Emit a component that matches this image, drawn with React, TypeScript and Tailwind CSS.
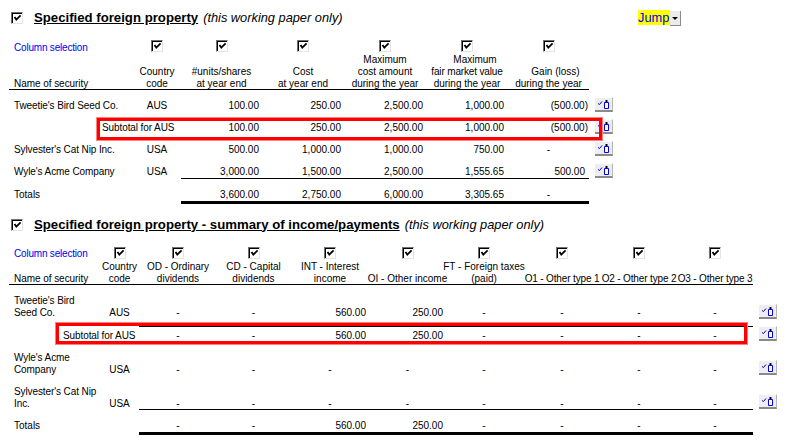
import type { ReactNode } from 'react'

const grid1 = 'grid grid-cols-[124px_48px_81px_82px_82px_82px_81px_24px]'
const grid2 = 'grid grid-cols-[91px_39px_78px_73px_80px_75px_78px_78px_76px_76px_24px]'

function Check() {
  return (
    <span className="inline-block w-[12px] h-[12px] shrink-0 bg-white border border-t-[#707070] border-l-[#707070] border-r-[#e4e4e4] border-b-[#e4e4e4]">
      <svg width="10" height="10" viewBox="0 0 10 10" className="block">
        <path d="M0 0.5H10M0.5 0V10" stroke="#000" strokeWidth="1" fill="none" />
        <path d="M2.5 4L4.3 6.6L8.6 2.4" stroke="#000" strokeWidth="1.8" fill="none" />
      </svg>
    </span>
  )
}

function RowButton() {
  return (
    <button className="block ml-[6px] w-[18px] h-[15px] bg-[#ededf2] border-b-2 border-b-[#8a8a8a] border-r border-r-[#b5b5b5] border-t border-t-white">
      <svg width="17" height="12" viewBox="0 0 17 12" className="block">
        <path d="M3 5.5L4.5 6.5L7 3.5" stroke="#0000ee" strokeWidth="1" fill="none" />
        <path d="M9.5 4.5H13.5V10.5H9.5Z" stroke="#0000ee" strokeWidth="1" fill="#fff" />
        <path d="M10.5 2H12.5V4H10.5Z" fill="#000" />
      </svg>
    </button>
  )
}

function Title({ children }: { children: ReactNode }) {
  return (
    <div className="flex items-center h-[16px] pl-[2px]">
      <Check />
      <span className="ml-[11px] leading-[16px] whitespace-nowrap">{children}</span>
    </div>
  )
}

function HeadCell({ labels, height }: { labels: ReactNode; height: string }) {
  return (
    <div className={`flex flex-col items-center ${height} justify-between text-center whitespace-nowrap`}>
      <Check />
      <div className="-mb-[1px]">{labels}</div>
    </div>
  )
}

const Num = ({ v, pr, cls = '' }: { v: string; pr: string; cls?: string }) => (
  <div className={`text-right ${pr} ${cls}`}>{v}</div>
)

const rows1 = [
  { name: "Tweetie's Bird Seed Co.", code: 'AUS', v: ['100.00', '250.00', '2,500.00', '1,000.00', '(500.00)'] },
  { name: 'Subtotal for AUS', code: '', v: ['100.00', '250.00', '2,500.00', '1,000.00', '(500.00)'] },
  { name: "Sylvester's Cat Nip Inc.", code: 'USA', v: ['500.00', '1,000.00', '1,000.00', '750.00', '-'] },
  { name: "Wyle's Acme Company", code: 'USA', v: ['3,000.00', '1,500.00', '2,500.00', '1,555.65', '500.00'] },
]

function gainCell(v: string, cls: string) {
  if (v === '-') return <div className={`text-center ${cls}`}>-</div>
  return <Num v={v} pr={v.startsWith('(') ? 'pr-[1px]' : 'pr-[4px]'} cls={cls} />
}

function PropertySection() {
  return (
    <section className="relative pl-[9px]">
      <div className="relative">
        <Title>
          <span className="text-[13.2px] font-bold underline">Specified foreign property</span>
          <span className="ml-[5px] text-[12.8px] italic">(this working paper only)</span>
        </Title>
        <div className="absolute left-[629px] top-0 flex items-start">
          <span className="bg-[#ffff00] text-[#0000ee] text-[12.8px] leading-[15px] h-[15px] w-[32px]">Jump</span>
          <span className="mt-[1px] w-[11px] h-[15px] flex items-center justify-center bg-[#ececec] border-b border-r border-b-[#8a8a8a] border-r-[#8a8a8a]">
            <span className="w-0 h-0 border-l-[3px] border-r-[3px] border-t-[3px] border-l-transparent border-r-transparent border-t-black" />
          </span>
        </div>
      </div>

      <div className={`${grid1} w-[604px] mt-[14px]`}>
        <div className="flex flex-col justify-between h-[49px] pl-[5px]">
          <span className="text-[#0000ee] mt-[2px] tracking-[-0.2px]">Column selection</span>
          <span className="-mb-[1px] tracking-[-0.05px]">Name of security</span>
        </div>
        <HeadCell height="h-[49px]" labels={<><div>Country</div><div>code</div></>} />
        <HeadCell height="h-[49px]" labels={<><div>#units/shares</div><div>at year end</div></>} />
        <HeadCell height="h-[49px]" labels={<><div>Cost</div><div>at year end</div></>} />
        <HeadCell height="h-[49px]" labels={<><div>Maximum</div><div>cost amount</div><div>during the year</div></>} />
        <HeadCell height="h-[49px]" labels={<><div className="pl-[16px]">Maximum</div><div className="tracking-[-0.15px]">fair market value</div><div>during the year</div></>} />
        <HeadCell height="h-[49px]" labels={<><div className="pl-[14px]">Gain (loss)</div><div>during the year</div></>} />
      </div>
      <div className="w-[580px] h-px bg-black" />

      <div className="mt-[6px]">
        {rows1.map((r, i) => {
          const last = i === 3
          const cls = last ? 'h-[17px] pt-[4px] border-b border-black' : 'pt-[4px]'
          return (
            <div key={r.name} className={`${grid1} w-[604px] ${last ? 'h-[17px]' : 'h-[22px]'}`}>
              {r.code ? (
                <>
                  <div className="pt-[4px] pl-[5px] whitespace-nowrap tracking-[-0.1px]">{r.name}</div>
                  <div className="pt-[4px] text-center">{r.code}</div>
                </>
              ) : (
                <div className="col-span-2 pt-[4px] pl-[93px] whitespace-nowrap tracking-[-0.1px]">{r.name}</div>
              )}
              <Num v={r.v[0]} pr="pr-[3px]" cls={cls} />
              <Num v={r.v[1]} pr="pr-[3px]" cls={cls} />
              <Num v={r.v[2]} pr="pr-[3px]" cls={cls} />
              <Num v={r.v[3]} pr="pr-[4px]" cls={cls} />
              {gainCell(r.v[4], cls)}
              <div className="pt-[1px]"><RowButton /></div>
            </div>
          )
        })}
        <div className={`${grid1} w-[604px]`}>
          <div className="col-span-2 pt-[10px] pl-[5px]">Totals</div>
          {['3,600.00', '2,750.00', '6,000.00'].map((v) => (
            <Num key={v} v={v} pr="pr-[3px]" cls="pt-[10px] border-b-[3px] border-black" />
          ))}
          <Num v="3,305.65" pr="pr-[4px]" cls="pt-[10px] border-b-[3px] border-black" />
          <div className="pt-[10px] border-b-[3px] border-black text-center">-</div>
        </div>
      </div>

      {/* red highlight sits over the subtotal row */}
      <div className="absolute left-[97px] top-[108px] w-[505px] h-[22px] border-[3px] border-[#ff0000] outline outline-1 outline-[#ff8080]" />
    </section>
  )
}

const rows2 = [
  { name: ["Tweetie's Bird", 'Seed Co.'], code: 'AUS', int: '560.00', oi: '250.00', h: 'h-[34px]', btn: 'pt-[10px]' },
  { name: ['Subtotal for AUS'], code: '', int: '560.00', oi: '250.00', h: 'h-[23px]', btn: '-mt-[2px]' },
  { name: ["Wyle's Acme", 'Company'], code: 'USA', int: '-', oi: '-', h: 'h-[34px]', btn: 'pt-[9px]' },
  { name: ["Sylvester's Cat Nip", 'Inc.'], code: 'USA', int: '-', oi: '-', h: 'h-[25px]', btn: 'pt-[9px]' },
]

function IncomeRow({ r, i }: { r: (typeof rows2)[number]; i: number }) {
  const sub = i === 1
  const cls =
    i === 0
      ? 'h-[33px] pt-[13px] border-b border-black'
      : sub
        ? 'pt-[2px]'
        : i === 3
          ? 'h-[25px] pt-[13px] border-b border-black'
          : 'pt-[13px]'
  return (
    <div className={`${grid2} w-[768px] ${r.h}`}>
      {sub ? (
        <div className="col-span-2 pt-[2px] pl-[54px] whitespace-nowrap tracking-[-0.1px]">{r.name[0]}</div>
      ) : (
        <>
          <div className="whitespace-nowrap pl-[5px] pt-[1px] tracking-[-0.1px]">
            {r.name.map((n) => <div key={n}>{n}</div>)}
          </div>
          <div className="pt-[13px] text-center">{r.code}</div>
        </>
      )}
      <div className={`text-center ${cls}`}>-</div>
      <div className={`text-center ${cls}`}>-</div>
      {r.int === '-' ? <div className={`text-center ${cls}`}>-</div> : <Num v={r.int} pr="pr-[4px]" cls={cls} />}
      {r.oi === '-' ? <div className={`text-center ${cls}`}>-</div> : <Num v={r.oi} pr="pr-[2px]" cls={cls} />}
      <div className={`text-center ${cls}`}>-</div>
      <div className={`text-center ${cls}`}>-</div>
      <div className={`text-center ${cls}`}>-</div>
      <div className={`text-center ${cls}`}>-</div>
      <div className={r.btn}><RowButton /></div>
    </div>
  )
}

function IncomeSection() {
  const total = 'pt-[10px] border-b-[3px] border-black'
  return (
    <section className="relative pl-[9px] mt-[13px]">
      <Title>
        <span className="text-[13.2px] font-bold underline">Specified foreign property - summary of income/payments</span>
        <span className="ml-[5px] text-[12.8px] italic">(this working paper only)</span>
      </Title>

      <div className={`${grid2} w-[768px] mt-[14px]`}>
        <div className="flex flex-col justify-between h-[37px] pl-[5px]">
          <span className="text-[#0000ee] mt-[1px] tracking-[-0.2px]">Column selection</span>
          <span className="-mb-[1px] tracking-[-0.05px]">Name of security</span>
        </div>
        <HeadCell height="h-[37px]" labels={<><div>Country</div><div>code</div></>} />
        <HeadCell height="h-[37px]" labels={<><div>OD - Ordinary</div><div>dividends</div></>} />
        <HeadCell height="h-[37px]" labels={<><div>CD - Capital</div><div>dividends</div></>} />
        <HeadCell height="h-[37px]" labels={<><div>INT - Interest</div><div>income</div></>} />
        <HeadCell height="h-[37px]" labels={<div>OI - Other income</div>} />
        <HeadCell height="h-[37px]" labels={<><div>FT - Foreign taxes</div><div>(paid)</div></>} />
        <HeadCell height="h-[37px]" labels={<div className="tracking-[-0.15px]">O1 - Other type 1</div>} />
        <HeadCell height="h-[37px]" labels={<div className="tracking-[-0.15px]">O2 - Other type 2</div>} />
        <HeadCell height="h-[37px]" labels={<div className="tracking-[-0.15px]">O3 - Other type 3</div>} />
      </div>
      <div className="w-[744px] h-px bg-black" />

      <div className="mt-[9px]">
        {rows2.map((r, i) => <IncomeRow key={r.name[0]} r={r} i={i} />)}
        <div className={`${grid2} w-[768px]`}>
          <div className="col-span-2 pt-[10px] pl-[5px]">Totals</div>
          <div className={`text-center ${total}`}>-</div>
          <div className={`text-center ${total}`}>-</div>
          <Num v="560.00" pr="pr-[4px]" cls={total} />
          <Num v="250.00" pr="pr-[2px]" cls={total} />
          <div className={`text-center ${total}`}>-</div>
          <div className={`text-center ${total}`}>-</div>
          <div className={`text-center ${total}`}>-</div>
          <div className={`text-center ${total}`}>-</div>
        </div>
      </div>

      <div className="absolute left-[56px] top-[106px] w-[691px] h-[21px] border-[3px] border-[#ff0000] outline outline-1 outline-[#ff8080]" />
    </section>
  )
}

export default function App() {
  return (
    <div className="w-[794px] h-[440px] overflow-hidden bg-white text-black pt-[10px] text-[10px] leading-[12px] font-['Liberation_Sans',Arial,sans-serif]">
      <PropertySection />
      <IncomeSection />
    </div>
  )
}
